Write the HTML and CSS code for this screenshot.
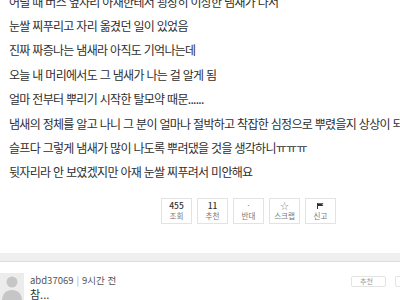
FILE: index.html
```html
<!DOCTYPE html>
<html lang="ko">
<head>
<meta charset="utf-8">
<link rel="stylesheet" href="styles.css">
</head>
<body>
<div class="article">
  <p>어릴 때 버스 옆자리 아재한테서 굉장히 이상한 냄새가 나서</p>
  <p>눈쌀 찌푸리고 자리 옮겼던 일이 있었음</p>
  <p>진짜 짜증나는 냄새라 아직도 기억나는데</p>
  <p>오늘 내 머리에서도 그 냄새가 나는 걸 알게 됨</p>
  <p>얼마 전부터 뿌리기 시작한 탈모약 때문......</p>
  <p>냄새의 정체를 알고 나니 그 분이 얼마나 절박하고 착잡한 심정으로 뿌렸을지 상상이 되더라</p>
  <p>슬프다 그렇게 냄새가 많이 나도록 뿌려댔을 것을 생각하니ㅠㅠㅠ</p>
  <p>뒷자리라 안 보였겠지만 아재 눈쌀 찌푸려서 미안해요</p>
</div>
<div class="actions">
  <div class="btn"><span class="num">455</span><span class="lbl">조회</span></div>
  <div class="btn"><span class="num">11</span><span class="lbl">추천</span></div>
  <div class="btn"><span class="num dim">·</span><span class="lbl">반대</span></div>
  <div class="btn"><span class="num dim">☆</span><span class="lbl">스크랩</span></div>
  <div class="btn"><span class="num"><svg width="7" height="6" viewBox="0 0 7 6"><path d="M0.5 0v6" stroke="#333" stroke-width="1"/><path d="M1 0.3h5.5l-1.3 1.4 1.3 1.4H1z" fill="#333"/></svg></span><span class="lbl">신고</span></div>
</div>
<div class="band"></div>
<div class="comment">
  <div class="avatar"><svg width="24" height="28" viewBox="0 0 24 28"><circle cx="12" cy="9" r="5.5" fill="#c6c6c6"/><path d="M2 28c0-7 4-11 10-11s10 4 10 11z" fill="#c6c6c6"/></svg></div>
  <div class="cbody">
    <div class="meta"><span class="user">abd37069</span><span class="sep">|</span><span class="time">9시간 전</span></div>
    <div class="ctext">참...</div>
  </div>
  <div class="cbtns">
    <div class="cbtn">추천</div>
    <div class="cbtn">반대</div>
  </div>
</div>
</body>
</html>
```
FILE: styles.css
```css
html, body {
  margin: 0;
  padding: 0;
  background: #fff;
  overflow: hidden;
}
body {
  width: 400px;
  height: 300px;
  font-family: "Noto Sans CJK KR", "Noto Sans", sans-serif;
  color: #333;
}
.article {
  margin-top: -10.5px;
  padding-left: 9px;
  white-space: nowrap;
}
.article p {
  margin: 0;
  font-size: 12px;
  letter-spacing: -0.7px;
  line-height: 24.4px;
  color: #2e2e2e;
}
.actions {
  display: flex;
  gap: 5px;
  margin-left: 161px;
  margin-top: 13px;
}
.btn {
  width: 31px;
  height: 26px;
  box-sizing: border-box;
  border: 1px solid #e3e3e3;
  display: flex;
  flex-direction: column;
  align-items: center;
  justify-content: center;
  gap: 1px;
}
.num {
  font-size: 8.5px;
  line-height: 9px;
  color: #333;
  font-weight: 500;
  height: 9px;
  display: flex;
  align-items: center;
}
.num.dim { color: #888; font-weight: 400; }
.lbl {
  font-size: 7.5px;
  line-height: 9px;
  color: #777;
}
.band {
  margin-top: 29px;
  height: 8px;
  background: #efefef;
  border-bottom: 1px solid #ddd;
}
.comment {
  display: flex;
  margin-top: 11px;
}
.avatar {
  width: 24px;
  height: 28px;
  background: #ececec;
  flex: none;
}
.avatar svg { display: block; }
.cbody {
  margin-left: 6px;
  flex: 1;
}
.meta {
  font-size: 9.5px;
  line-height: 14px;
  color: #555;
}
.sep { color: #aaa; margin: 0 3px; }
.ctext {
  font-size: 11px;
  line-height: 14px;
  color: #333;
}
.cbtns {
  display: flex;
  gap: 9px;
  margin-top: 3px;
  margin-right: -30px;
}
.cbtn {
  width: 35px;
  height: 11px;
  box-sizing: border-box;
  border: 1px solid #e3e3e3;
  border-radius: 2px;
  font-size: 7px;
  line-height: 9px;
  color: #999;
  padding-left: 8px;
}
```
